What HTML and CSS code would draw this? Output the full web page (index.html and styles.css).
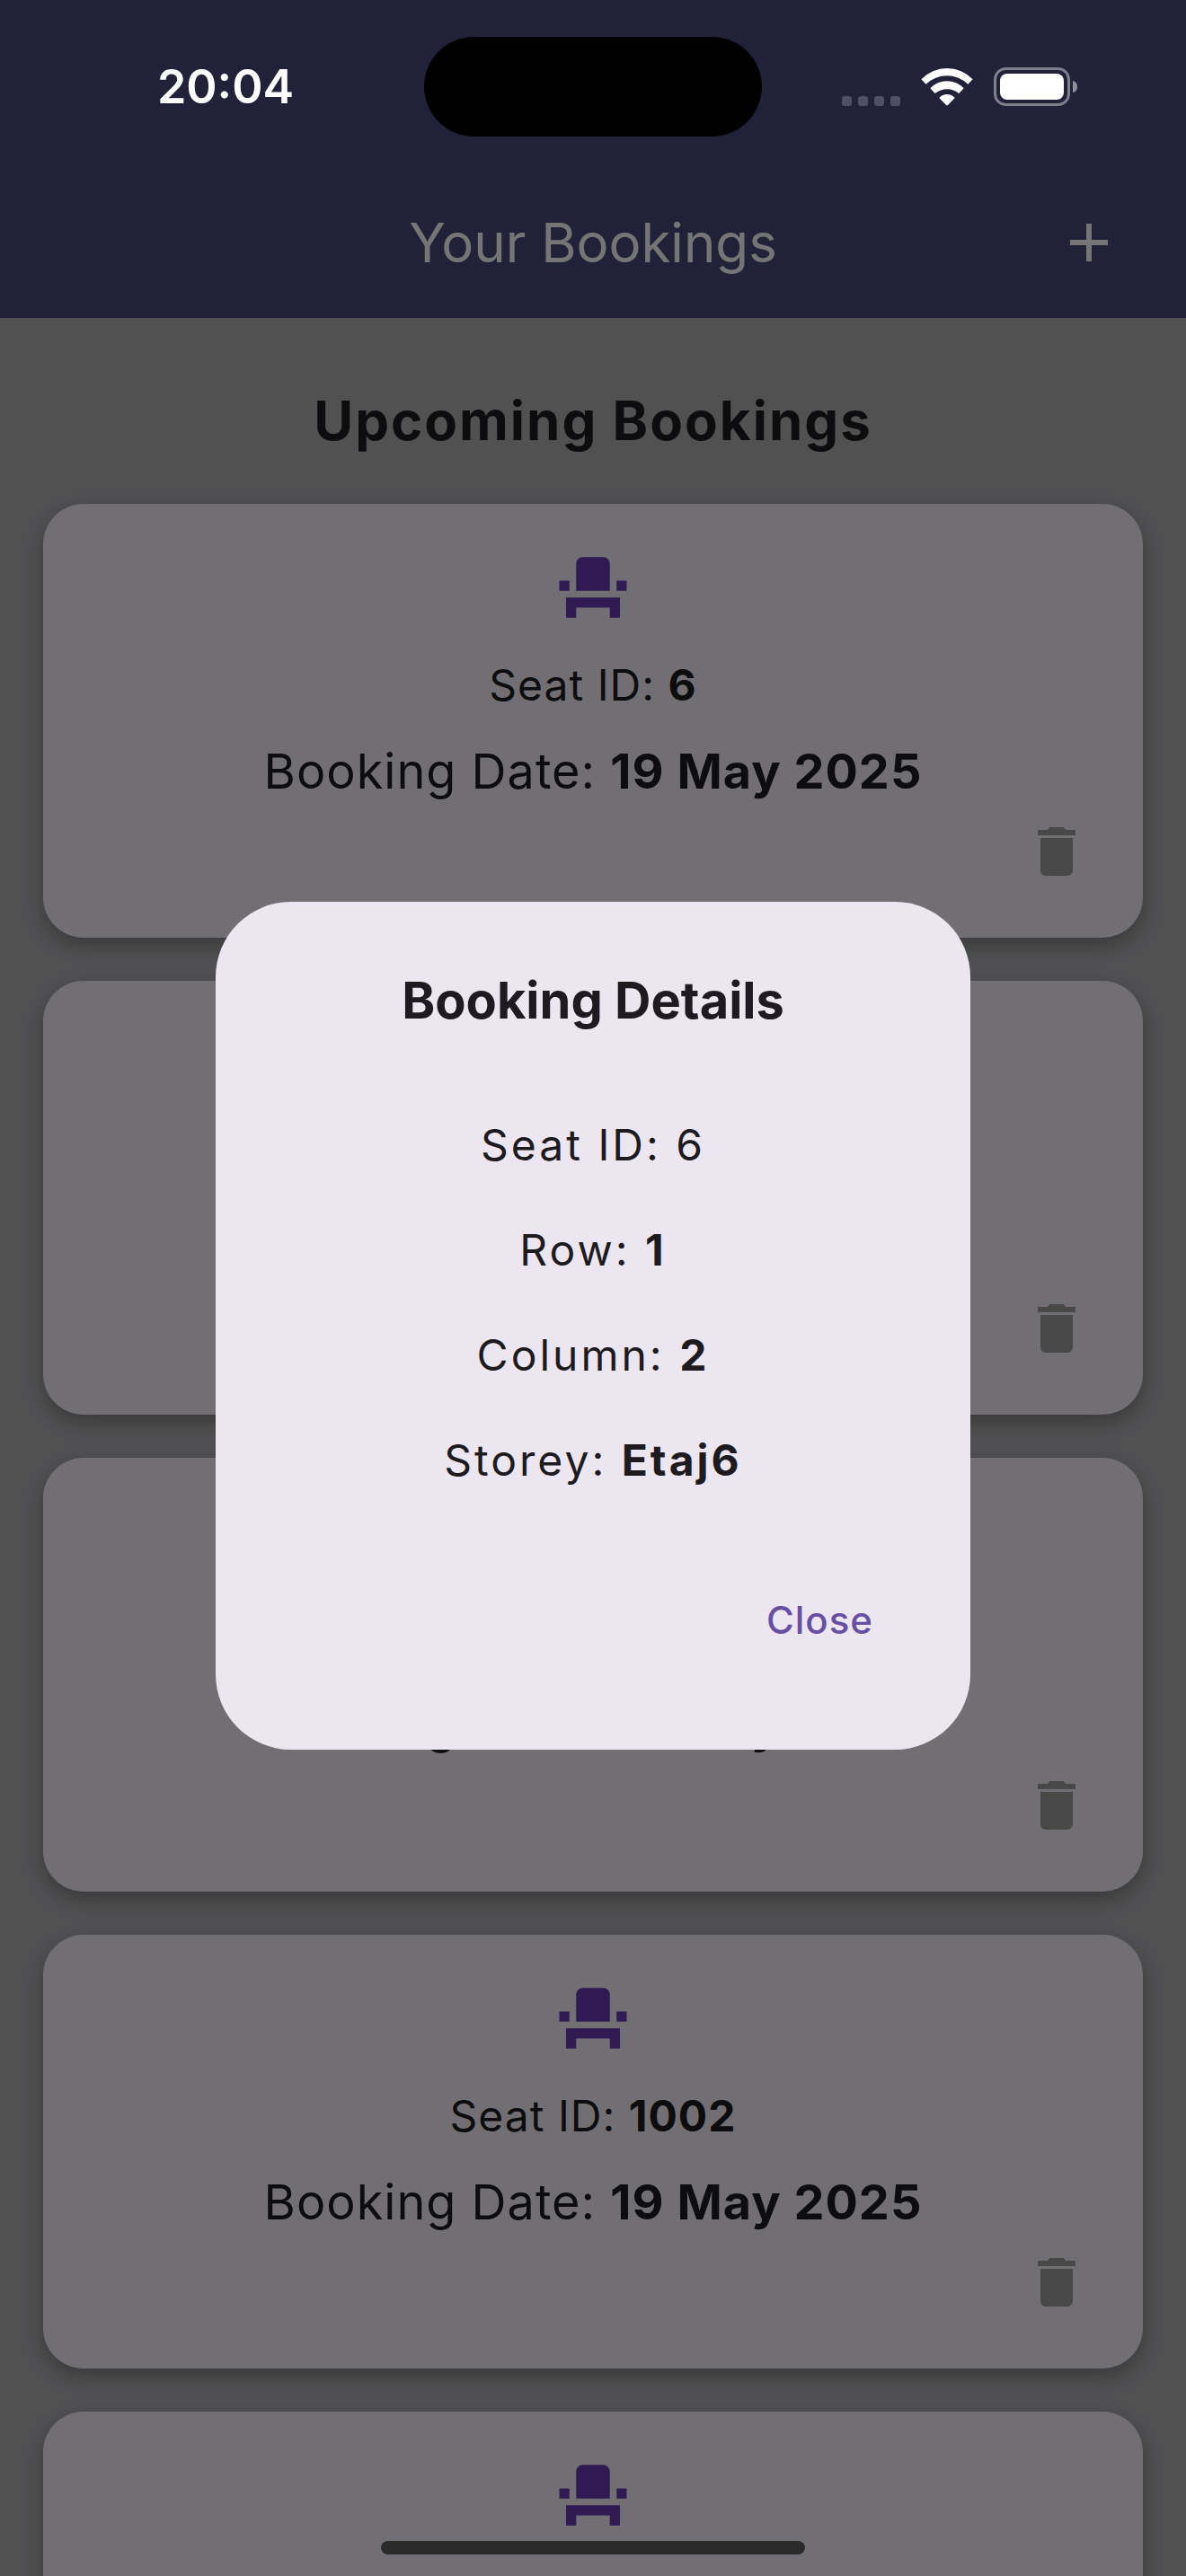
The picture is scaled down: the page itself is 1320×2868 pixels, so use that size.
FILE: index.html
```html
<!DOCTYPE html>
<html lang="en">
<head>
<meta charset="utf-8">
<meta name="viewport" content="width=device-width, initial-scale=1">
<title>Your Bookings</title>
<link rel="stylesheet" href="styles.css">
</head>
<body>
<svg class="sprite" aria-hidden="true">
  <symbol id="seat" viewBox="0 0 24 24"><path d="M4 18v3h3v-3h10v3h3v-6H4zm15-8h3v3h-3zM2 10h3v3H2zm15 3H7V5c0-1.100.9-2 2-2h6c1.100 0 2 .9 2 2z"/></symbol>
  <symbol id="trash" viewBox="0 0 24 24"><path d="M6 19c0 1.100.9 2 2 2h8c1.100 0 2-.9 2-2V7H6zM19 4h-3.500l-1-1h-5l-1 1H5v2h14z"/></symbol>
  <symbol id="plus" viewBox="0 0 24 24"><path d="M19 13h-6v6h-2v-6H5v-2h6V5h2v6h6z"/></symbol>
</svg>

<div class="app">
  <header class="app-bar">
    <h1 class="app-title">Your Bookings</h1>
    <button class="icon-button add-button" type="button" aria-label="Add booking"><svg class="icon"><use href="#plus"/></svg></button>
  </header>
  <main class="content">
    <h2 class="section-title">Upcoming Bookings</h2>
    <ul class="bookings">
      <li class="card">
        <svg class="seat-icon" aria-hidden="true"><use href="#seat"/></svg>
        <p class="seat">Seat ID: <b>6</b></p>
        <p class="date">Booking Date: <b>19 May 2025</b></p>
        <button class="icon-button delete-button" type="button" aria-label="Delete booking"><svg class="icon"><use href="#trash"/></svg></button>
      </li>
      <li class="card">
        <svg class="seat-icon" aria-hidden="true"><use href="#seat"/></svg>
        <p class="seat"></p>
        <p class="date"></p>
        <button class="icon-button delete-button" type="button" aria-label="Delete booking"><svg class="icon"><use href="#trash"/></svg></button>
      </li>
      <li class="card">
        <svg class="seat-icon" aria-hidden="true"><use href="#seat"/></svg>
        <p class="seat"></p>
        <p class="date">Booking Date: <b>19 May 2025</b></p>
        <button class="icon-button delete-button" type="button" aria-label="Delete booking"><svg class="icon"><use href="#trash"/></svg></button>
      </li>
      <li class="card">
        <svg class="seat-icon" aria-hidden="true"><use href="#seat"/></svg>
        <p class="seat">Seat ID: <b>1002</b></p>
        <p class="date">Booking Date: <b>19 May 2025</b></p>
        <button class="icon-button delete-button" type="button" aria-label="Delete booking"><svg class="icon"><use href="#trash"/></svg></button>
      </li>
      <li class="card">
        <svg class="seat-icon" aria-hidden="true"><use href="#seat"/></svg>
      </li>
    </ul>
  </main>
</div>

<div class="scrim">
  <section class="dialog" role="dialog" aria-modal="true" aria-labelledby="dialog-title">
    <h2 class="dialog-title" id="dialog-title">Booking Details</h2>
    <div class="details">
      <p>Seat ID: 6</p>
      <p>Row: <b>1</b></p>
      <p>Column: <b>2</b></p>
      <p>Storey: <b>Etaj6</b></p>
    </div>
    <button class="close-button" type="button">Close</button>
  </section>
</div>

<div class="status-bar">
  <time class="clock">20:04</time>
  <div class="island"></div>
  <div class="indicators">
    <svg class="cellular" viewBox="0 0 65 11" aria-hidden="true"><rect width="11" height="11" rx="3"/><rect x="18" width="11" height="11" rx="3"/><rect x="36" width="11" height="11" rx="3"/><rect x="54" width="11" height="11" rx="3"/></svg>
    <svg class="wifi" viewBox="373 104 174 129" aria-hidden="true"><path d="M374 144A118 118 0 0 1 546 144L530 160A101 101 0 0 0 390 160ZM404 174A76 76 0 0 1 516 174L500 191A64 64 0 0 0 420 191ZM434 206A34 34 0 0 1 486 206L463 230Q460 232 457 230Z"/></svg>
    <svg class="battery" viewBox="0 0 93 43" aria-hidden="true"><rect class="battery-case" x="1.500" y="1.500" width="82" height="40" rx="12"/><rect class="battery-level" x="7" y="7" width="71" height="29" rx="8"/><path class="battery-tip" d="M88 15q5 1 5 6.500t-5 6.500z"/></svg>
  </div>
</div>
<div class="home-indicator"></div>
</body>
</html>
```

FILE: styles.css
```css
* {
  box-sizing: border-box;
}

body {
  margin: 0;
  background: #b0b1b4;
  color: #1d1b20;
  font-family: Inter, "Liberation Sans", sans-serif;
}

h1,
h2,
p,
ul {
  margin: 0;
  padding: 0;
}

button {
  border: 0;
  background: none;
  font: inherit;
  cursor: pointer;
}

.sprite {
  position: absolute;
  width: 0;
  height: 0;
}

.app {
  height: 100vh;
  overflow: hidden;
}

.app-bar {
  display: grid;
  grid-template-columns: 1fr auto 1fr;
  align-items: center;
  padding: 186px 60px 0;
  height: 354px;
  background: #4a487e;
  color: #fff;
}

.app-title {
  grid-column: 2;
  font-size: 60px;
  font-weight: 400;
  line-height: 84px;
}

.icon-button {
  display: flex;
  padding: 12px;
}

.icon {
  width: 72px;
  height: 72px;
  fill: currentColor;
}

.add-button {
  justify-self: end;
  color: #fff;
}

.content {
  padding: 78px 48px 0;
}

.section-title {
  margin-bottom: 57px;
  font-size: 60px;
  font-weight: 700;
  line-height: 72px;
  letter-spacing: 2px;
  text-align: center;
}

.bookings {
  display: flex;
  flex-direction: column;
  gap: 48px;
  list-style: none;
}

.card {
  display: flex;
  flex-direction: column;
  align-items: center;
  min-height: 483px;
  padding: 48px;
  border-radius: 45px;
  background: #f7f2fa;
  box-shadow: 0 9px 24px rgba(0, 0, 0, 0.3);
  letter-spacing: 1px;
}

.seat-icon {
  width: 90px;
  height: 90px;
  margin-bottom: 32px;
  fill: #673ab7;
}

.seat {
  min-height: 64px;
  margin-bottom: 28px;
  font-size: 48px;
  line-height: 64px;
}

.date {
  font-size: 54px;
  line-height: 72px;
}

.delete-button {
  align-self: flex-end;
  margin-top: auto;
  color: #9e9e9e;
}

.scrim {
  position: fixed;
  inset: 0;
  display: flex;
  align-items: center;
  justify-content: center;
  padding: 186px 48px 102px;
  background: rgba(0, 0, 0, 0.54);
}

.dialog {
  display: flex;
  flex-direction: column;
  width: 840px;
  max-width: 100%;
  padding: 72px;
  border-radius: 84px;
  background: #ece6f0;
  text-align: center;
}

.dialog-title {
  margin-bottom: 88px;
  font-size: 56px;
  font-weight: 700;
  line-height: 76px;
}

.details {
  display: flex;
  flex-direction: column;
  gap: 48px;
  margin-bottom: 72px;
  font-size: 48px;
  line-height: 69px;
  letter-spacing: 3px;
}

.close-button {
  align-self: flex-end;
  padding: 42px 36px;
  color: #6750a4;
  font-size: 42px;
  font-weight: 500;
  line-height: 60px;
  letter-spacing: 1px;
}

.status-bar {
  position: fixed;
  inset: 0 0 auto;
  display: grid;
  grid-template-columns: 1fr auto 1fr;
  align-items: center;
  height: 193px;
  color: #fff;
}

.clock {
  justify-self: center;
  padding-left: 30px;
  font-size: 52px;
  font-weight: 600;
  line-height: 64px;
}

.island {
  width: 376px;
  height: 111px;
  border-radius: 56px;
  background: #000;
}

.indicators {
  display: flex;
  align-items: flex-end;
  justify-content: flex-end;
  gap: 23px;
  padding-right: 121px;
}

.cellular {
  width: 65px;
  height: 11px;
  fill: #514f66;
}

.wifi {
  width: 58px;
  height: 43px;
  fill: #fff;
}

.battery {
  width: 93px;
  height: 43px;
}

.battery-case {
  fill: none;
  stroke: #7f7d8e;
  stroke-width: 3;
}

.battery-level {
  fill: #fff;
}

.battery-tip {
  fill: #8f8e9c;
}

.home-indicator {
  position: fixed;
  bottom: 24px;
  left: 50%;
  width: 472px;
  max-width: 60%;
  height: 15px;
  border-radius: 8px;
  background: #2b2b2b;
  translate: -50% 0;
}
```
